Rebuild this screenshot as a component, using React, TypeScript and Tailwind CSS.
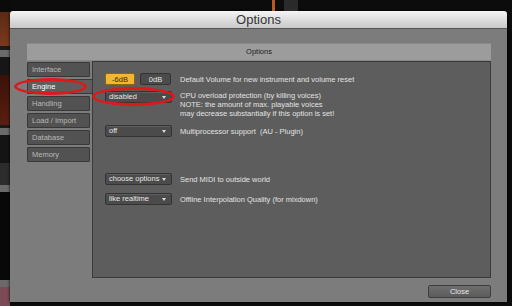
import React from "react";

const font = { fontFamily: '"Liberation Sans", Arial, sans-serif' };

function Dropdown({ label }: { label: string }) {
  return (
    <div className="flex h-[12px] w-[67px] shrink-0 items-center justify-between whitespace-nowrap rounded-[2px] border border-[#333] bg-[#4b4b4b] pl-[3px] pr-[5px] text-[7.5px] leading-none text-[#e6e6e6] shadow-[inset_0_1px_0_#5e5e5e]">
      <span>{label}</span>
      <span className="h-0 w-0 border-x-[2.5px] border-t-[3px] border-x-transparent border-t-[#ddd]" />
    </div>
  );
}

function Tab({ label, active }: { label: string; active?: boolean }) {
  if (active) {
    return (
      <div className="-mr-[3px] flex h-[15px] items-center border-y border-l border-[#3a3a3a] bg-[#5d5d5d] pl-[4px] text-[7.5px] text-white">
        {label}
      </div>
    );
  }
  return (
    <div className="flex h-[15px] w-[63px] items-center rounded-[1px] border border-[#383838] bg-[#525252] pl-[4px] text-[7.5px] text-[#b8b8b8]">
      {label}
    </div>
  );
}

export default function App() {
  return (
    <div className="relative flex h-[306px] w-[512px] overflow-hidden bg-[#0c0c0c]" style={font}>
      {/* host app behind the dialog */}
      <div className="flex w-[10px] flex-col">
        <div className="h-[12px] bg-[#0a0a0a]" />
        <div className="h-[34px] bg-gradient-to-b from-[#5a2a14] to-[#7a3a1c]" />
        <div className="h-[4px] bg-[#1a1a1a]" />
        <div className="h-[7px] bg-[#6a6a6a]" />
        <div className="h-[18px] bg-[#161616]" />
        <div className="h-[50px] bg-gradient-to-b from-[#3a1208] to-[#5a1e10]" />
        <div className="h-[3px] bg-[#1a1a1a]" />
        <div className="h-[7px] bg-[#6a6a6a]" />
        <div className="h-[28px] bg-[#141414]" />
        <div className="h-[22px] bg-[#2c2c2c]" />
        <div className="h-[7px] bg-[#6a6a6a]" />
        <div className="h-[88px] bg-[#080808]" />
        <div className="h-[7px] bg-[#6a6a6a]" />
        <div className="flex-1 bg-[#7a4a55]" />
      </div>

      <div className="absolute left-[272px] top-0 h-[11px] w-[3px] bg-[#b85a20]" />
      <div className="absolute left-[284px] top-0 h-[11px] w-[14px] bg-[#2a2a2a]" />

      {/* dialog */}
      <div className="mt-[11px] flex h-[291px] w-[497px] flex-col rounded-t-[3px] shadow-[0_0_3px_#000]">
        <div className="flex h-[17px] items-center justify-center rounded-t-[3px] bg-gradient-to-b from-[#f4f4f4] to-[#c9c9c9] text-[13px] text-[#333]">
          Options
        </div>
        <div className="flex flex-1 flex-col border-t border-[#555] bg-[#7c7c7c] pl-[17px] pr-[16px] pt-[14px]">
          <div className="flex h-[18px] items-center justify-center border-y border-[#888] bg-[#9c9c9c] text-[7.5px] text-[#222]">
            Options
          </div>
          <div className="flex">
            <div className="flex w-[65px] flex-col gap-[2px] pt-[1px]">
              <Tab label="Interface" />
              <Tab label="Engine" active />
              <Tab label="Handling" />
              <Tab label="Load / Import" />
              <Tab label="Database" />
              <Tab label="Memory" />
            </div>
            <div className="flex h-[217px] flex-1 flex-col border border-[#3a3a3a] bg-[#5d5d5d] pl-[12px] pt-[11px] text-[7.5px] leading-[9px] text-[#e2e2e2]">
              <div className="flex items-center gap-[8px]">
                <div className="flex w-[67px] gap-[5px]">
                  <div className="flex h-[12px] w-[30px] items-center justify-center rounded-[2px] border border-[#8a6a10] bg-[#f2b632] text-[#3a2a00]">
                    -6dB
                  </div>
                  <div className="flex h-[12px] w-[31px] items-center justify-center rounded-[2px] border border-[#333] bg-[#4b4b4b] text-[#e6e6e6]">
                    0dB
                  </div>
                </div>
                <span>Default Volume for new instrument and volume reset</span>
              </div>
              <div className="mt-[6px] flex items-start gap-[8px]">
                <Dropdown label="disabled" />
                <div className="flex flex-col">
                  <span>CPU overload protection (by killing voices)</span>
                  <span>NOTE: the amount of max. playable voices</span>
                  <span>may decrease substantially if this option is set!</span>
                </div>
              </div>
              <div className="mt-[7px] flex items-center gap-[8px]">
                <Dropdown label="off" />
                <span>Multiprocessor support&nbsp; (AU - Plugin)</span>
              </div>
              <div className="mt-[36px] flex items-center gap-[8px]">
                <Dropdown label="choose options" />
                <span>Send MIDI to outside world</span>
              </div>
              <div className="mt-[8px] flex items-center gap-[8px]">
                <Dropdown label="like realtime" />
                <span>Offline Interpolation Quality (for mixdown)</span>
              </div>
            </div>
          </div>
          <div className="mt-[7px] flex justify-end">
            <div className="flex h-[13px] w-[63px] items-center justify-center rounded-[2px] border border-[#3e3e3e] bg-gradient-to-b from-[#6e6e6e] to-[#5c5c5c] text-[7.5px] text-[#e8e8e8]">
              Close
            </div>
          </div>
        </div>
      </div>

      {/* red annotation circles */}
      <div className="absolute left-[14px] top-[78px] h-[17px] w-[73px] rounded-[50%] border-[3px] border-[#dc1a1a]" />
      <div className="absolute left-[92px] top-[87px] h-[19px] w-[83px] rounded-[50%] border-[3px] border-[#dc1a1a]" />
    </div>
  );
}
